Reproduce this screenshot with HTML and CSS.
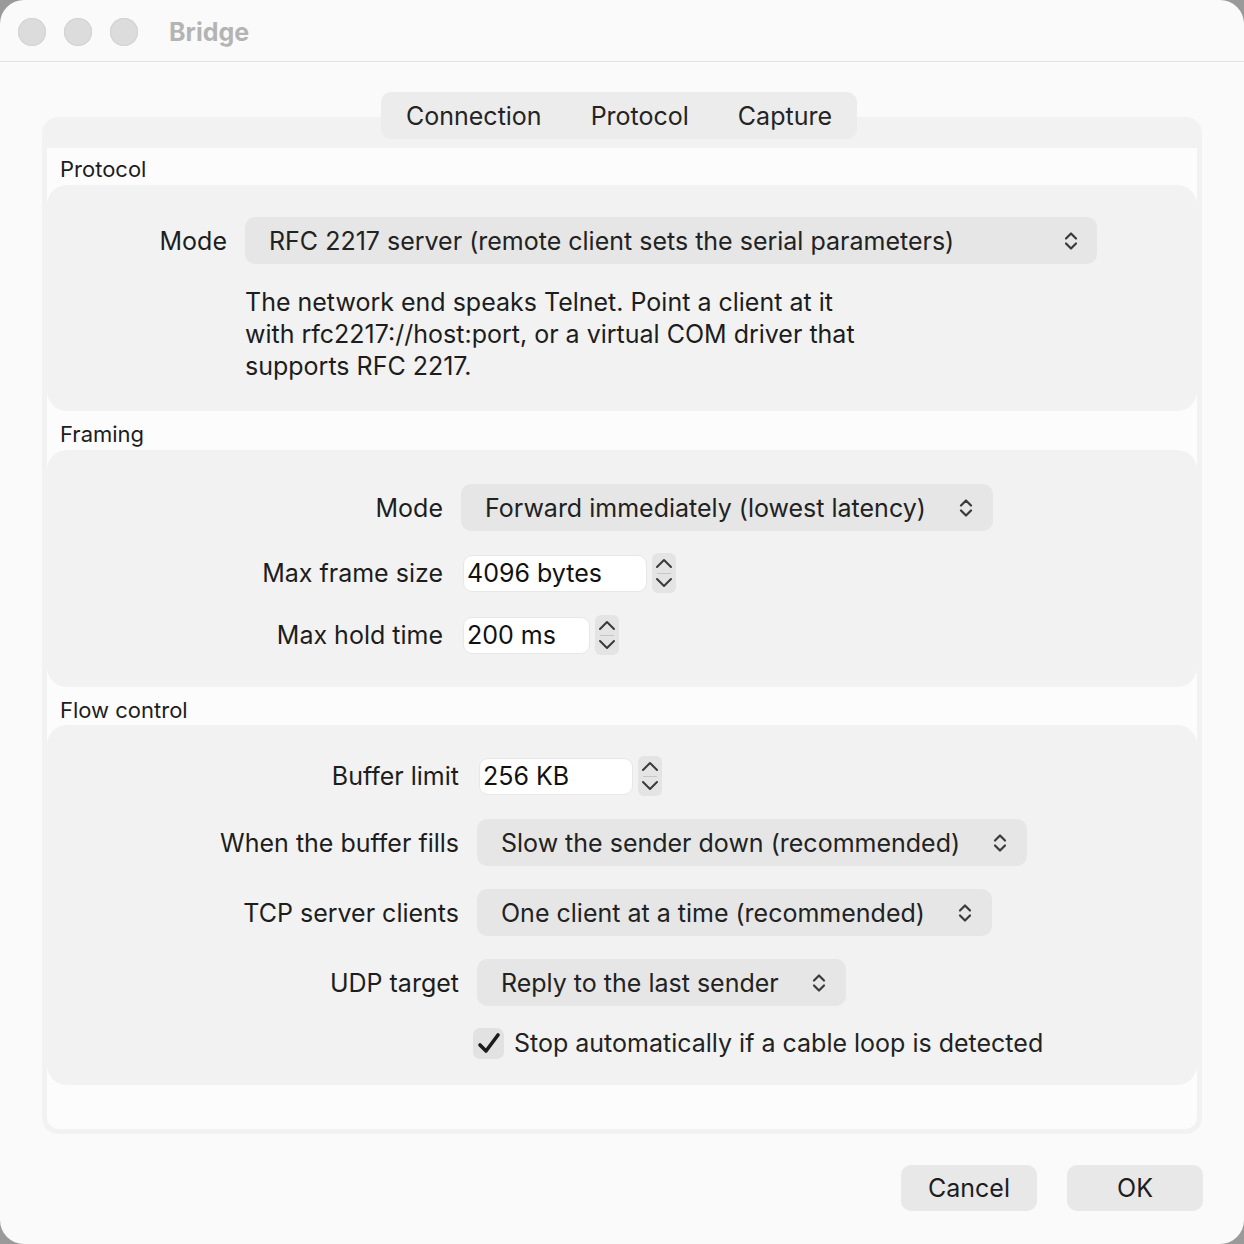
FILE: index.html
```html
<!DOCTYPE html>
<html lang="en">
<head>
<meta charset="utf-8">
<title>Bridge</title>
<link rel="stylesheet" href="styles.css">
</head>
<body>
<div class="window">
  <header class="titlebar">
    <span class="light"></span><span class="light"></span><span class="light"></span>
    <span class="title">Bridge</span>
  </header>

  <div class="tabs-wrap">
    <nav class="tabs">
      <span class="tab">Connection</span>
      <span class="tab">Protocol</span>
      <span class="tab">Capture</span>
    </nav>
  </div>

  <section class="tabbox">
    <div class="tabbox-inner">
      <h2 class="heading">Protocol</h2>
      <div class="group g-protocol">
        <span class="label">Mode</span>
        <div class="popup popup-wide">
          <span>RFC 2217 server (remote client sets the serial parameters)</span>
          <svg class="updown" viewBox="0 0 14 22"><path d="M2 8.5 L7 3.5 L12 8.5 M2 13.5 L7 18.5 L12 13.5"/></svg>
        </div>
        <p class="desc">The network end speaks Telnet. Point a client at it<br>with rfc2217://host:port, or a virtual COM driver that<br>supports RFC 2217.</p>
      </div>

      <h2 class="heading h-framing">Framing</h2>
      <div class="group g-framing">
        <span class="label">Mode</span>
        <div class="popup">
          <span>Forward immediately (lowest latency)</span>
          <svg class="updown" viewBox="0 0 14 22"><path d="M2 8.5 L7 3.5 L12 8.5 M2 13.5 L7 18.5 L12 13.5"/></svg>
        </div>
        <span class="label">Max frame size</span>
        <div class="numrow">
          <span class="field w-frame">4096 bytes</span>
          <svg class="stepper" viewBox="0 0 24 40"><rect width="24" height="40" rx="6"/><path class="sep" d="M5 20.5 H19"/><path class="chev" d="M5 14 L12 7 L19 14 M5 26 L12 33 L19 26"/></svg>
        </div>
        <span class="label">Max hold time</span>
        <div class="numrow">
          <span class="field w-hold">200 ms</span>
          <svg class="stepper" viewBox="0 0 24 40"><rect width="24" height="40" rx="6"/><path class="sep" d="M5 20.5 H19"/><path class="chev" d="M5 14 L12 7 L19 14 M5 26 L12 33 L19 26"/></svg>
        </div>
      </div>

      <h2 class="heading h-flow">Flow control</h2>
      <div class="group g-flow">
        <span class="label">Buffer limit</span>
        <div class="numrow">
          <span class="field w-buffer">256 KB</span>
          <svg class="stepper" viewBox="0 0 24 40"><rect width="24" height="40" rx="6"/><path class="sep" d="M5 20.5 H19"/><path class="chev" d="M5 14 L12 7 L19 14 M5 26 L12 33 L19 26"/></svg>
        </div>
        <span class="label">When the buffer fills</span>
        <div class="popup">
          <span>Slow the sender down (recommended)</span>
          <svg class="updown" viewBox="0 0 14 22"><path d="M2 8.5 L7 3.5 L12 8.5 M2 13.5 L7 18.5 L12 13.5"/></svg>
        </div>
        <span class="label">TCP server clients</span>
        <div class="popup">
          <span>One client at a time (recommended)</span>
          <svg class="updown" viewBox="0 0 14 22"><path d="M2 8.5 L7 3.5 L12 8.5 M2 13.5 L7 18.5 L12 13.5"/></svg>
        </div>
        <span class="label">UDP target</span>
        <div class="popup">
          <span>Reply to the last sender</span>
          <svg class="updown" viewBox="0 0 14 22"><path d="M2 8.5 L7 3.5 L12 8.5 M2 13.5 L7 18.5 L12 13.5"/></svg>
        </div>
        <label class="check">
          <svg class="checkbox" viewBox="0 0 31 31"><rect width="31" height="31" rx="7"/><path d="M7 17 L13 23 L25 7"/></svg>
          <span>Stop automatically if a cable loop is detected</span>
        </label>
      </div>
    </div>
  </section>

  <footer class="footer">
    <button class="btn">Cancel</button>
    <button class="btn">OK</button>
  </footer>
</div>
</body>
</html>
```

FILE: styles.css
```css
html, body {
  margin: 0;
  padding: 0;
  background: #9a9a9a;
}

.window {
  width: 1244px;
  height: 1244px;
  box-sizing: border-box;
  border-radius: 24px;
  overflow: hidden;
  background: #fafafa;
  font-family: Inter, "Noto Sans", sans-serif;
  color: #1d1d1d;
  display: flex;
  flex-direction: column;
}

.titlebar {
  height: 62px;
  box-sizing: border-box;
  padding-top: 2px;
  border-bottom: 1px solid #e2e2e2;
  display: flex;
  align-items: center;
  padding-left: 18px;
  gap: 18px;
  flex-shrink: 0;
}

.light {
  width: 28px;
  height: 28px;
  border-radius: 50%;
  background: #dcdcdc;
  box-shadow: inset 0 0 0 1px #d2d2d2;
}

.title {
  margin-left: 13px;
  font-size: 25px;
  font-weight: 700;
  color: #b4b4b4;
}

.tabs-wrap {
  display: flex;
  justify-content: center;
  margin-top: 30px;
  margin-bottom: -22px;
  position: relative;
  z-index: 1;
  padding-right: 6px;
}

.tabs {
  display: flex;
  height: 47px;
  background: #ececec;
  border-radius: 10px;
}

.tab {
  display: flex;
  align-items: center;
  padding: 0 24.5px;
  font-size: 25px;
  color: #242424;
}

.tabbox {
  margin: 0 42px;
  background: #f2f2f2;
  border-radius: 16px;
  padding: 31px 5px 5px;
}

.tabbox-inner {
  background: #fcfcfc;
  border-radius: 0 0 12px 12px;
  padding-bottom: 44px;
}

.heading {
  margin: 0;
  height: 37px;
  padding-left: 13px;
  box-sizing: border-box;
  padding-top: 7px;
  font-size: 22px;
  font-weight: 400;
  line-height: 28px;
  color: #1d1d1d;
}

.h-framing {
  height: 39px;
  padding-top: 9px;
}

.h-flow {
  height: 38px;
  padding-top: 9px;
}

.group {
  background: #f2f2f2;
  border-radius: 20px;
  display: grid;
  column-gap: 18px;
  row-gap: 22px;
  align-items: center;
  font-size: 25px;
}

.g-protocol {
  grid-template-columns: 180px 1fr;
  padding: 32px 0 29px;
}

.g-framing {
  grid-template-columns: 396px 1fr;
  padding: 34px 0 32px;
}

.g-flow {
  grid-template-columns: 412px 1fr;
  row-gap: 23px;
  padding: 31px 0 27px;
}

.label {
  justify-self: end;
  white-space: nowrap;
}

.popup {
  justify-self: start;
  display: inline-flex;
  align-items: center;
  height: 47px;
  box-sizing: border-box;
  padding: 0 20px 0 24px;
  gap: 33px;
  background: #e6e6e6;
  border-radius: 10px;
  white-space: nowrap;
  color: #222;
}

.popup-wide {
  width: 852px;
  justify-content: space-between;
  padding-right: 19px;
}

.updown {
  width: 14px;
  height: 22px;
  flex-shrink: 0;
}

.updown path {
  fill: none;
  stroke: #3a3a3a;
  stroke-width: 2.2;
  stroke-linecap: round;
  stroke-linejoin: round;
}

.desc {
  grid-column: 2;
  margin: 0;
  line-height: 32px;
  color: #1d1d1d;
}

.numrow {
  display: flex;
  align-items: center;
  gap: 5px;
  margin-left: 2px;
}

.field {
  height: 37px;
  box-sizing: border-box;
  background: #fff;
  border: 1px solid #e7e7e7;
  border-radius: 9px;
  padding-left: 3px;
  display: flex;
  align-items: center;
  color: #111;
}

.w-frame { width: 184px; }
.w-hold { width: 127px; }
.w-buffer { width: 154px; }

.stepper {
  width: 24px;
  height: 40px;
  flex-shrink: 0;
}

.stepper rect { fill: #e4e4e4; }
.stepper .sep { stroke: #c6c6c6; stroke-width: 1; fill: none; }
.stepper .chev {
  fill: none;
  stroke: #3a3a3a;
  stroke-width: 2;
  stroke-linecap: round;
  stroke-linejoin: round;
}

.check {
  grid-column: 2;
  display: flex;
  align-items: center;
  gap: 10px;
  margin-left: -4px;
  margin-top: -1px;
  height: 30px;
  color: #222;
}

.checkbox {
  width: 31px;
  height: 31px;
  flex-shrink: 0;
}

.checkbox rect { fill: #e2e2e2; }
.checkbox path {
  fill: none;
  stroke: #1c1c1c;
  stroke-width: 3.6;
  stroke-linecap: round;
  stroke-linejoin: round;
}

.footer {
  display: flex;
  justify-content: flex-end;
  gap: 30px;
  margin-top: 31px;
  padding-right: 41px;
}

.btn {
  width: 136px;
  height: 46px;
  border: none;
  border-radius: 10px;
  background: #e8e8e8;
  font-family: Inter, "Noto Sans", sans-serif;
  font-size: 25px;
  color: #1d1d1d;
  padding: 0;
}
```
